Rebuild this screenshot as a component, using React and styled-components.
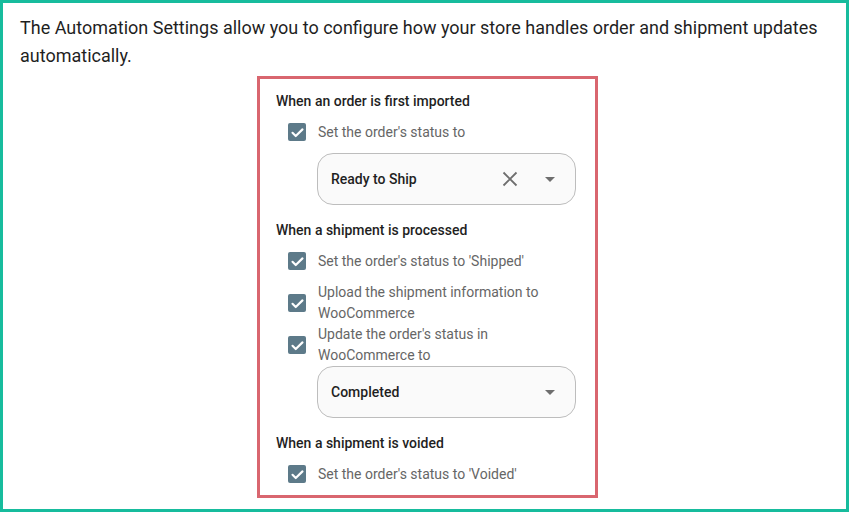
import React from "react";
import styled, { createGlobalStyle } from "styled-components";

const GlobalStyle = createGlobalStyle`
  * { box-sizing: border-box; }
  html, body { margin: 0; padding: 0; background: #ffffff; }
  body { font-family: "Roboto", "Liberation Sans", sans-serif; }
`;

const sections = [
  {
    title: "When an order is first imported",
    rows: [{ label: "Set the order's status to" }],
    select: { value: "Ready to Ship", clearable: true },
  },
  {
    title: "When a shipment is processed",
    rows: [
      { label: "Set the order's status to 'Shipped'" },
      { label: "Upload the shipment information to WooCommerce" },
      { label: "Update the order's status in WooCommerce to" },
    ],
    select: { value: "Completed", clearable: false },
  },
  {
    title: "When a shipment is voided",
    rows: [{ label: "Set the order's status to 'Voided'" }],
  },
];

function CheckIcon() {
  return (
    <svg width="15" height="15" viewBox="0 0 24 24" fill="none">
      <path
        d="M4 12.5l5.2 5.2L20 7"
        stroke="#ffffff"
        strokeWidth="3.4"
        strokeLinecap="round"
        strokeLinejoin="round"
      />
    </svg>
  );
}

function Select({ value, clearable }) {
  return (
    <SelectBox>
      <SelectValue>{value}</SelectValue>
      {clearable && (
        <ClearIcon width="16" height="16" viewBox="0 0 16 16">
          <path d="M1.5 1.5L14.5 14.5M14.5 1.5L1.5 14.5" stroke="#6e6e6e" strokeWidth="1.8" />
        </ClearIcon>
      )}
      <svg width="10" height="5" viewBox="0 0 10 5">
        <path d="M0 0h10L5 5z" fill="#6e6e6e" />
      </svg>
    </SelectBox>
  );
}

export default function App() {
  return (
    <>
      <GlobalStyle />
      <Frame>
        <Intro>
          The Automation Settings allow you to configure how your store handles
          order and shipment updates automatically.
        </Intro>
        <Panel>
          {sections.map((section) => (
            <Section key={section.title}>
              <SectionTitle>{section.title}</SectionTitle>
              {section.rows.map((row) => (
                <CheckRow key={row.label}>
                  <Checkbox>
                    <CheckIcon />
                  </Checkbox>
                  <CheckLabel>{row.label}</CheckLabel>
                </CheckRow>
              ))}
              {section.select && <Select {...section.select} />}
            </Section>
          ))}
        </Panel>
      </Frame>
    </>
  );
}

const Frame = styled.div`
  width: 849px;
  height: 512px;
  border: 3px solid #17bc9d;
  padding: 11px 17px 0 17px;
  overflow: hidden;
`;

const Intro = styled.p`
  margin: 0;
  font-size: 18px;
  line-height: 28px;
  color: #1f1f1f;
`;

const Panel = styled.div`
  width: 341px;
  margin: 6px 0 0 237px;
  border: 3px solid #d9666f;
  padding: 12px 16px 0 16px;
  display: flex;
  flex-direction: column;
  gap: 15px;
`;

const Section = styled.div`
  display: flex;
  flex-direction: column;
`;

const SectionTitle = styled.div`
  font-size: 14px;
  font-weight: 500;
  line-height: 20px;
  color: #1f1f1f;
`;

const CheckRow = styled.div`
  display: flex;
  align-items: center;
  gap: 12px;
  min-height: 42px;
  padding-left: 12px;
`;

const Checkbox = styled.span`
  flex: none;
  width: 18px;
  height: 18px;
  border-radius: 2px;
  background: #5d7a89;
  display: flex;
  align-items: center;
  justify-content: center;
`;

const CheckLabel = styled.span`
  max-width: 258px;
  font-size: 14px;
  line-height: 21px;
  color: #666666;
`;

const SelectBox = styled.div`
  width: 259px;
  height: 52px;
  margin-left: 41px;
  border: 1px solid #bdbdbd;
  border-radius: 16px;
  background: #fafafa;
  display: flex;
  align-items: center;
  padding: 0 20px 0 13px;
`;

const SelectValue = styled.span`
  flex: 1;
  font-size: 14px;
  font-weight: 500;
  color: #1f1f1f;
`;

const ClearIcon = styled.svg`
  margin-right: 27px;
`;
